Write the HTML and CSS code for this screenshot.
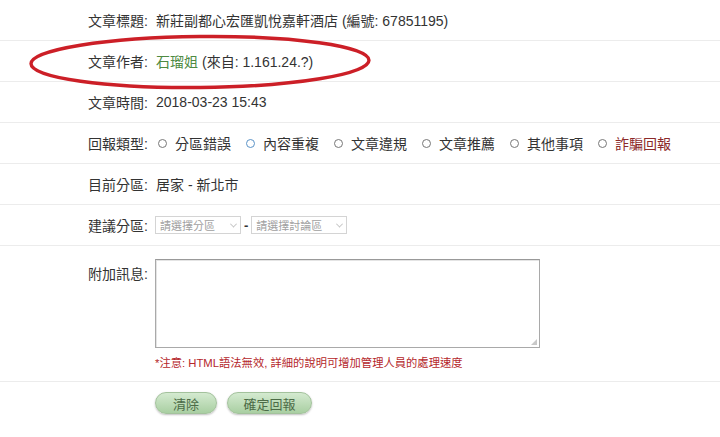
FILE: index.html
```html
<!DOCTYPE html>
<html lang="zh-Hant">
<head>
<meta charset="utf-8">
<link rel="stylesheet" href="styles.css">
</head>
<body>
<div class="form">
  <div class="row">
    <div class="label">文章標題:</div>
    <div class="value">新莊副都心宏匯凱悅嘉軒酒店 (編號: 67851195)</div>
  </div>
  <div class="row">
    <div class="label">文章作者:</div>
    <div class="value"><span class="author">石瑠姐</span> (來自: 1.161.24.?)</div>
  </div>
  <div class="row">
    <div class="label">文章時間:</div>
    <div class="value">2018-03-23 15:43</div>
  </div>
  <div class="row">
    <div class="label">回報類型:</div>
    <div class="value radios">
      <span class="radio"><i class="dot"></i>分區錯誤</span>
      <span class="radio"><i class="dot focus"></i>內容重複</span>
      <span class="radio"><i class="dot"></i>文章違規</span>
      <span class="radio"><i class="dot"></i>文章推薦</span>
      <span class="radio"><i class="dot"></i>其他事項</span>
      <span class="radio fraud"><i class="dot"></i>詐騙回報</span>
    </div>
  </div>
  <div class="row">
    <div class="label">目前分區:</div>
    <div class="value">居家 - 新北市</div>
  </div>
  <div class="row">
    <div class="label">建議分區:</div>
    <div class="value selects">
      <span class="select s1">請選擇分區<b class="caret"></b></span>
      <span class="dash">-</span>
      <span class="select s2">請選擇討論區<b class="caret"></b></span>
    </div>
  </div>
  <div class="row tall">
    <div class="label">附加訊息:</div>
    <div class="value col">
      <div class="textarea"><span class="grip"></span></div>
      <div class="note">*注意: HTML語法無效, 詳細的說明可增加管理人員的處理速度</div>
    </div>
  </div>
  <div class="row buttons">
    <div class="label"></div>
    <div class="value btns">
      <span class="btn b1">清除</span>
      <span class="btn b2">確定回報</span>
    </div>
  </div>
  <svg class="circle" width="360" height="64" viewBox="0 0 360 64">
    <ellipse cx="180" cy="32" rx="169" ry="25.5" fill="none" stroke="#cc1f27" stroke-width="3.4" transform="rotate(-0.6 180 32)"/>
  </svg>
</div>
</body>
</html>
```

FILE: styles.css
```css
html, body {
  margin: 0;
  padding: 0;
  background: #fff;
}
body {
  font-family: "Liberation Sans", "Noto Sans CJK TC", sans-serif;
  font-size: 14px;
  color: #333;
  width: 720px;
  height: 437px;
  overflow: hidden;
}
.form {
  position: relative;
}
.row {
  display: flex;
  align-items: center;
  height: 40px;
  border-bottom: 1px solid #ececec;
}
.label {
  width: 148px;
  text-align: right;
  flex: none;
  color: #333;
}
.value {
  margin-left: 8px;
  display: flex;
  align-items: center;
  white-space: nowrap;
}
.value > .author { margin-right: 4px; }
.author { color: #4e8a42; }
.radios { gap: 0; margin-left: 10px; }
.radio {
  display: inline-flex;
  align-items: center;
  margin-right: 15px;
}
.dot {
  width: 7px;
  height: 7px;
  border: 1px solid #777;
  border-radius: 50%;
  margin-right: 8px;
  display: inline-block;
}
.dot.focus { border-color: #5b93c7; }
.fraud { color: #8c2a2a; }
.selects { gap: 3px; margin-left: 7px; }
.select {
  display: inline-flex;
  align-items: center;
  height: 18px;
  border: 1px solid #d4d4d4;
  color: #a0a0a0;
  font-size: 11px;
  padding: 0 4px 0 4px;
  box-sizing: border-box;
}
.s1 { width: 86px; }
.s2 { width: 96px; }
.caret {
  margin-left: auto;
  width: 4px;
  height: 4px;
  border-right: 1px solid #c4c4c4;
  border-bottom: 1px solid #c4c4c4;
  transform: rotate(45deg) translate(-1px, -1px);
}
.dash { color: #333; font-weight: bold; font-size: 13px; }
.row.tall {
  height: auto;
  align-items: flex-start;
  padding: 13px 0 11px;
}
.row.tall .label { padding-top: 4px; }
.col {
  flex-direction: column;
  align-items: flex-start;
  margin-left: 7px;
}
.textarea {
  width: 385px;
  height: 89px;
  box-sizing: border-box;
  border: 1px solid #a9a9a9;
  border-top-color: #999;
  box-shadow: inset 1px 1px 0 #e4e4e4;
  position: relative;
}
.grip {
  position: absolute;
  right: 2px;
  bottom: 2px;
  width: 6px;
  height: 6px;
  background: radial-gradient(circle, #aaa 0.6px, transparent 0.9px) 0 0 / 2px 2px;
  clip-path: polygon(100% 0, 100% 100%, 0 100%);
}
.note {
  color: #b5272b;
  font-size: 11.3px;
  margin-top: 8px;
  line-height: 14px;
}
.row.buttons {
  border-bottom: none;
  height: auto;
  padding-top: 10px;
}
.btns { gap: 10px; margin-left: 7px; }
.btn {
  display: inline-flex;
  align-items: center;
  justify-content: center;
  height: 22px;
  border-radius: 11px;
  border: 1px solid #a3c29c;
  background: linear-gradient(#d4ead0, #a9cfa2);
  box-shadow: 0 1px 2px rgba(0,0,0,0.25);
  color: #4c6b47;
  font-size: 13px;
  box-sizing: border-box;
}
.b1 { width: 62px; }
.b2 { width: 85px; }
.circle {
  position: absolute;
  left: 20px;
  top: 30px;
  pointer-events: none;
}
```
